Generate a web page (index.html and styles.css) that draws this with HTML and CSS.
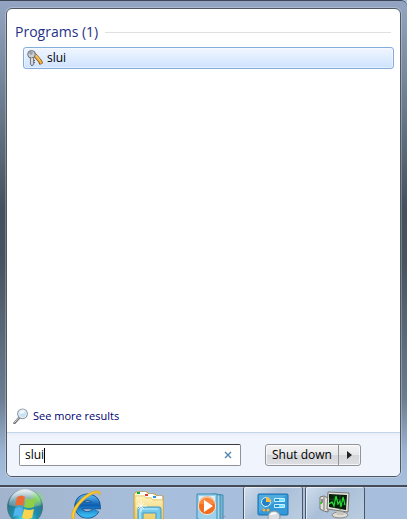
FILE: index.html
```html
<!DOCTYPE html>
<html lang="en">
  <head>
    <meta charset="UTF-8" />
    <meta name="viewport" content="width=device-width, initial-scale=1.0" />
    <title>Start menu</title>
    <link rel="stylesheet" href="styles.css">
  </head>
  <body>
    <!-- Start menu -->
    <main class="start-menu">
      <div class="panel">
        <section class="results">
          <div class="group-title">
            <h1>Programs (1)</h1>
            <span class="rule"></span>
          </div>
          <button class="result" type="button">
            <svg width="16" height="16" viewBox="0 0 16 16">
              <path d="M6 3l7 8 1.500 3" fill="none" stroke="#8c5a14" stroke-width="4" />
              <path d="M6 3l7 8 1.500 2.500" fill="none" stroke="#f0b03c" stroke-width="2.400" />
              <path d="M7 3l6 7" stroke="#ffe09a" stroke-width="0.800" />
              <path d="M3.300 7h3.400v7.500L5 16l-1.500-1.500z" fill="#b8bcc4" stroke="#5b6069" stroke-width="0.800" />
              <circle cx="4.500" cy="4.300" r="3.800" fill="#c9cdd6" stroke="#6c7078" />
              <circle cx="4" cy="3" r="1.100" fill="#fff" stroke="#62666e" stroke-width="0.800" />
              <path d="M5 8v6" stroke="#f4f5f7" />
              <path d="M6.500 10.500h1.500M6.500 12.500h1.500" stroke="#5b6069" />
            </svg>
            <span>slui</span>
          </button>
          <a class="more" href="#">
            <svg width="16" height="16" viewBox="0 0 16 16">
              <path d="M6.500 9.500L1.500 15" stroke="#777" stroke-width="2.600" stroke-linecap="round" />
              <path d="M6 9.500l-4.500 5" stroke="#d8d8d8" stroke-width="1" />
              <circle cx="9.500" cy="5.800" r="4.800" fill="#c5e2f6" stroke="#8d959e" stroke-width="1.200" />
              <circle cx="9.500" cy="5.800" r="3.900" fill="none" stroke="#f2f7fb" stroke-width="0.800" />
              <path d="M6.500 5.500a3 3 0 0 1 5.500-1.500q-2 2.500-5.500 1.500" fill="#f2faff" />
            </svg>
            <span>See more results</span>
          </a>
        </section>

        <footer class="menu-footer">
          <div class="search">
            <label class="search-text">
              <input type="text" value="slui" aria-label="Search programs and files">
              <span class="caret"></span>
            </label>
            <button class="clear" type="button" aria-label="Clear search">
              <svg width="8" height="8" viewBox="0 0 8 8">
                <path d="M1 1l6 6M7 1L1 7" stroke="#4f86b4" stroke-width="1.400" />
              </svg>
            </button>
          </div>
          <div class="power">
            <button class="shut-down" type="button">Shut down</button>
            <button class="power-options" type="button" aria-label="Power options">
              <svg width="5" height="8" viewBox="0 0 5 8">
                <path d="M0 0l5 4-5 4z" fill="#222" />
              </svg>
            </button>
          </div>
        </footer>
      </div>
    </main>

    <!-- Taskbar -->
    <nav class="taskbar">
      <button class="start" type="button" aria-label="Start">
        <svg width="38" height="38" viewBox="0 0 38 38">
          <defs>
            <radialGradient id="orb" cx="50%" cy="85%" r="85%">
              <stop offset="0" stop-color="#5ef0f4" />
              <stop offset="0.400" stop-color="#1f91ae" />
              <stop offset="0.750" stop-color="#2e7186" />
              <stop offset="1" stop-color="#a5c4cf" />
            </radialGradient>
            <radialGradient id="glow">
              <stop offset="0" stop-color="#7dea4e" />
              <stop offset="1" stop-color="#7dea4e" stop-opacity="0" />
            </radialGradient>
            <linearGradient id="shine" x2="0" y2="1">
              <stop offset="0" stop-color="#fff" stop-opacity="0.800" />
              <stop offset="1" stop-color="#fff" stop-opacity="0.150" />
            </linearGradient>
          </defs>
          <circle cx="19" cy="19" r="17.500" fill="url(#orb)" stroke="#4d7688" />
          <path d="M3 17a16 16 0 0 1 32 0q-16 5-32 0" fill="url(#shine)" />
          <circle cx="31" cy="11" r="9" fill="url(#glow)" opacity="0.700" />
          <path d="M11 9q5-3 8 0l-2 9q-4-2-8 0z" fill="#ee6b37" />
          <path d="M20 10q5 3 10 0l-2 9q-5 2-10 0z" fill="#8fce45" />
          <path d="M9 20q4-2 8 0l-2 9q-4-3-8 0z" fill="#50b5ef" />
          <path d="M18 21q5 2 10 0l-2 9q-5 2-10 0z" fill="#fbd34c" />
        </svg>
      </button>
      <button class="task" type="button" aria-label="Internet Explorer">
        <svg width="34" height="34" viewBox="0 0 34 34">
          <defs>
            <linearGradient id="ie" x2="0" y2="1">
              <stop offset="0" stop-color="#4aa7e8" />
              <stop offset="0.450" stop-color="#0d5cae" />
              <stop offset="1" stop-color="#36b5ec" />
            </linearGradient>
          </defs>
          <path d="M26 22a9.500 8.800 0 1 1 1-4.500H11" fill="none" stroke="#14508e" stroke-width="7.400" />
          <path d="M26 22a9.500 8.800 0 1 1 1-4.500H11" fill="none" stroke="url(#ie)" stroke-width="6" />
          <path d="M5 33C-3 30 5 15 15 8 23 2 32 1 30 7c-1-5-9-1-15 4C7 18 2 27 5 33z" fill="#ffd034" stroke="#e5a616" stroke-width="0.800" />
        </svg>
      </button>
      <button class="task" type="button" aria-label="Windows Explorer">
        <svg width="34" height="34" viewBox="0 0 34 34">
          <defs>
            <linearGradient id="folder" x2="0" y2="1">
              <stop offset="0" stop-color="#fff3bd" />
              <stop offset="1" stop-color="#e9c95f" />
            </linearGradient>
          </defs>
          <path d="M2 34V6l2-2h11l2 2h6l2 2h6v26z" fill="url(#folder)" stroke="#c49a3e" />
          <path d="M5 4h9l2 3H5z" fill="#fff" /><path d="M5 4h3v2H5z" fill="#0aaf2c" />
          <path d="M12 6h9l2 3H13z" fill="#fff" /><path d="M13 6h3v2h-3z" fill="#d83c2e" />
          <path d="M20 8h10v3H20z" fill="#fff" /><path d="M21 8h3v2h-3z" fill="#2791e0" />
          <path d="M3 8h9l2 2h5l2 2h10v22H3z" fill="url(#folder)" stroke="#d9b85c" stroke-width="0.600" />
          <path d="M6 34V21q0-2 2-2h19q2 0 2 2v13h-5v-9H11v9z" fill="#75c9ea" stroke="#4299c2" />
          <path d="M8 34V22q0-1 2-1h16" fill="none" stroke="#c8f2ff" />
          <path d="M9 13v11M4 18h11M6 15l6 6M12 15l-6 6" stroke="#fff" stroke-width="0.800" />
        </svg>
      </button>
      <button class="task" type="button" aria-label="Windows Media Player">
        <svg width="34" height="34" viewBox="0 0 34 34">
          <path d="M20 6l9 1v25l-9 3z" fill="#74b5d4" stroke="#3e8bb0" />
          <path d="M18 6l8 1v26l-8 2z" fill="#a4d7ea" stroke="#3e8bb0" />
          <path d="M3 6h20v28L3 31z" fill="#9ed0e9" stroke="#388cb6" />
          <path d="M5 8h16v10H5z" fill="#d8f1fa" />
          <circle cx="13" cy="18" r="8.600" fill="#f16e1e" stroke="#fff" stroke-width="0.700" />
          <path d="M5 16a8 8 0 0 1 16 0z" fill="#ff9a53" opacity="0.600" />
          <path d="M10 12l9 6-9 6z" fill="#fff" />
          <path d="M28 28h4l-4 2z" fill="#7d91aa" />
        </svg>
      </button>
      <button class="task open" type="button" aria-label="Control Panel">
        <svg width="34" height="34" viewBox="0 0 34 34">
          <rect x="2" y="6" width="30" height="21" rx="1" fill="#3598d7" stroke="#1971b0" />
          <path d="M3 7h28L3 24z" fill="#63b7e5" opacity="0.600" />
          <circle cx="10" cy="14" r="4.500" fill="#2581c4" stroke="#d7f2ff" />
          <path d="M10 14V9a5 5 0 0 1 5 5z" fill="#ffbd45" />
          <path d="M18.500 10.500h10v3h-10zM18.500 16.500h10v3h-10z" fill="#2790ce" stroke="#c9f2ff" />
          <path d="M23 11h5v2h-5zM23 17h5v2h-5z" fill="#79e3ff" />
          <circle cx="8" cy="22" r="1.500" fill="#ffac31" />
          <circle cx="12" cy="22" r="1.500" fill="#ffac31" />
          <circle cx="18" cy="29" r="6" fill="#d7dce0" stroke="#8e989f" />
          <path d="M14 27a4 4 0 0 1 7-1z" fill="#fff" />
        </svg>
      </button>
      <button class="task open" type="button" aria-label="Task Manager">
        <svg width="34" height="34" viewBox="0 0 34 34">
          <path d="M2 9l4-1 4 2v14l-4-1-4-2z" fill="#e3e1dc" stroke="#77776f" />
          <path d="M6 9v13" stroke="#77776f" /><path d="M3 12h2M3 14h2" stroke="#333" />
          <path d="M3 14v2" stroke="#39c62f" stroke-width="2" />
          <ellipse cx="22" cy="27" rx="8" ry="3" fill="#dedcd7" stroke="#8a8983" />
          <path d="M18 22l7 1 1 4h-7z" fill="#c5c4be" />
          <path d="M10 4l21 1-1 19-21-3z" fill="#e5e3df" stroke="#777770" />
          <path d="M11 6l18 1-1 15-17-3z" fill="#091c0b" />
          <path d="M11 11l17 1M11 15l17 2M16 6v14M22 7v15" stroke="#195e22" stroke-width="0.700" />
          <path d="M11 16l3-2 2 4 2-10 2 8 2-3 1 6 2-10 2 8" fill="none" stroke="#22df38" stroke-width="1.200" />
        </svg>
      </button>
    </nav>
  </body>
</html>
```
FILE: styles.css
```css
/* Base styles */
* {
  margin: 0;
  padding: 0;
  box-sizing: border-box;
}

body {
  display: flex;
  flex-direction: column;
  height: 100vh;
  overflow: hidden;
  font-family: "Open Sans", "Noto Sans", sans-serif;
  font-size: 12px;
  line-height: 16px;
  color: #000;
  background: #a7bfdc;
}

button {
  font: inherit;
  color: inherit;
  border: none;
  background: none;
}

svg {
  display: block;
  flex-shrink: 0;
}

/* Start menu */
.start-menu {
  flex: 1;
  display: flex;
  min-height: 0;
  padding: 7px 6px 8px;
  border-top: 1px solid #414656;
  border-radius: 0 6px 0 0;
  background: linear-gradient(#93a5c3, #75879b 16%, #44505c 43%, #47535f 54%, #6a7c90 82%, #9bb3d2 93%, #a7c0de);
}

.panel {
  flex: 1;
  display: flex;
  flex-direction: column;
  overflow: hidden;
  border: 1px solid #4d5863;
  border-radius: 6px;
  box-shadow: 0 0 0 1px rgba(255, 255, 255, 0.25);
  background: #fff;
}

/* Search results */
.results {
  flex: 1;
  display: flex;
  flex-direction: column;
  padding: 12px 6px 8px 8px;
}

.group-title {
  display: flex;
  align-items: center;
  gap: 7px;
  padding-right: 3px;
}

.group-title h1 {
  font-size: 14px;
  font-weight: normal;
  line-height: 22px;
  color: #1f3287;
}

.rule {
  flex: 1;
  height: 1px;
  background: #e0e0e0;
}

.result {
  display: flex;
  align-items: center;
  gap: 4px;
  height: 22px;
  margin: 4px 0 0 8px;
  padding: 0 3px;
  border: 1px solid #84acdd;
  border-radius: 3px;
  background: linear-gradient(#f0f6ff, #cfe3ff);
  box-shadow: inset 0 0 0 1px rgba(255, 255, 255, 0.4);
}

.more {
  display: flex;
  align-items: center;
  align-self: flex-start;
  gap: 4px;
  margin: auto 0 0 -2px;
  font-size: 11px;
  color: #00006f;
  text-decoration: none;
}

/* Footer */
.menu-footer {
  display: flex;
  align-items: flex-start;
  gap: 24px;
  height: 44px;
  padding: 11px 12px;
  border-top: 1px solid #c5d5e8;
  background: linear-gradient(#e7edf7, #f0f4fc 4px);
}

.search {
  display: flex;
  align-items: center;
  flex: 0 1 222px;
  min-width: 0;
  height: 22px;
  padding: 0 8px 0 5px;
  border: 1px solid #8e9298;
  border-top-color: #393b3d;
  border-radius: 2px;
  background: #fff;
}

.search-text {
  flex: 1;
  display: flex;
  align-items: center;
  min-width: 0;
}

.search input {
  field-sizing: content;
  min-width: 0;
  border: none;
  outline: none;
  font: inherit;
  background: none;
}

.caret {
  width: 1px;
  height: 15px;
  background: #000;
}

.power {
  display: flex;
  height: 22px;
  border: 1px solid #929499;
  border-radius: 3px;
  background: linear-gradient(#f4f4f5, #e7e8ea 48%, #d5d6da 52%, #dedfe3);
  box-shadow: inset 0 0 0 1px rgba(255, 255, 255, 0.7);
}

.shut-down {
  padding: 0 6px;
  white-space: nowrap;
}

.power-options {
  padding: 0 8px;
  border-left: 1px solid #929499;
}

/* Taskbar */
.taskbar {
  display: flex;
  flex-shrink: 0;
  gap: 2px;
  height: 34px;
  overflow: hidden;
  border-top: 2px solid #454c58;
  box-shadow: inset 0 1px 0 #c0d2e7;
  background: linear-gradient(to right, #a2b4cd, #a7bfdc 40%, #a7bfdc);
}

.start {
  width: 55px;
  height: 40px;
  padding-left: 6px;
}

.task {
  display: flex;
  justify-content: center;
  width: 60px;
  height: 40px;
  padding-top: 1px;
  border: 1px solid transparent;
  border-top: none;
  border-radius: 2px;
}

.task.open {
  border-color: #4a5668;
  background: linear-gradient(135deg, #d0ddec, #a9bfd8 40%, #bdcee1);
  box-shadow: inset 1px 1px 0 rgba(255, 255, 255, 0.6);
}
```
